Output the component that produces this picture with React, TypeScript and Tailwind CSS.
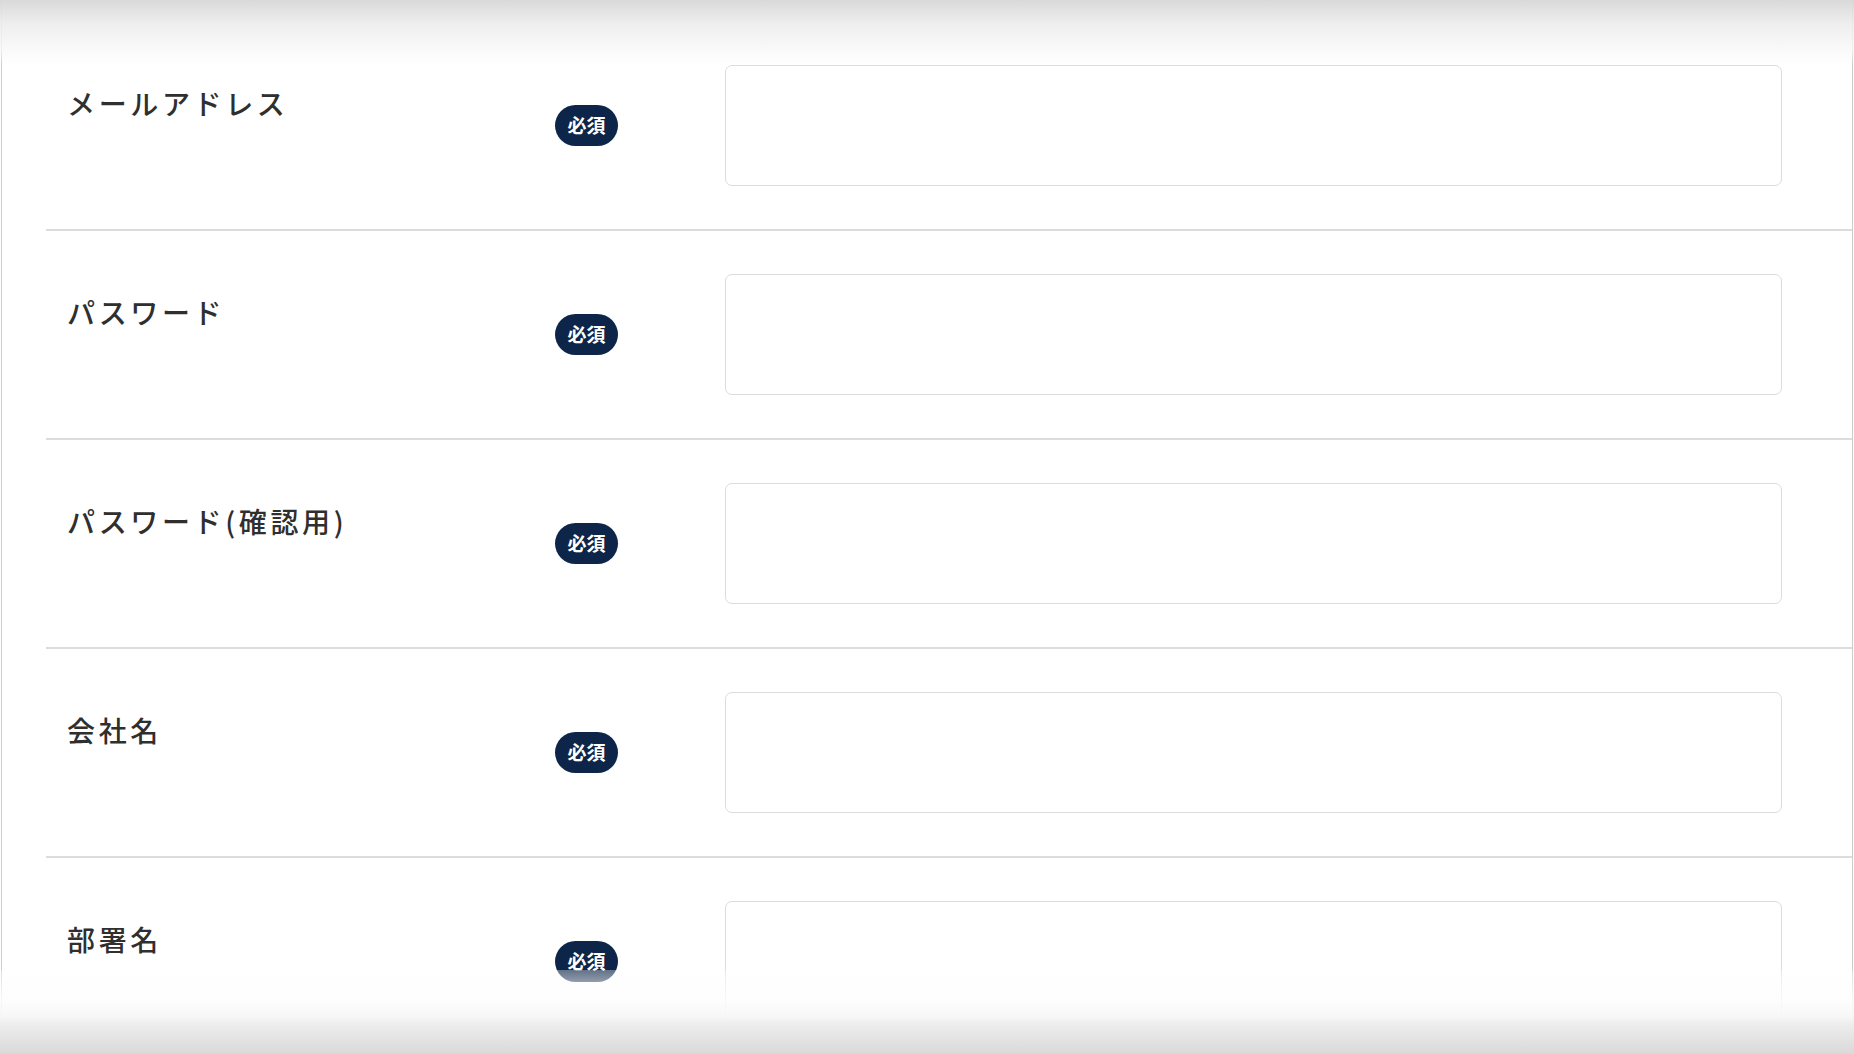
const fields = ["メールアドレス", "パスワード", "パスワード(確認用)", "会社名", "部署名"]

const Row = ({ label }: { label: string }) => {
    return (
        <div className="flex items-start ml-[44px] pl-[21px] py-[43px] border-b-2 border-[#dcdcdc]">
            <div className="w-[488px] pt-[17px] text-[28px] leading-[42px] tracking-[0.13em] font-medium text-[#2f2f2f]">
                {label}
            </div>
            <div className="self-center w-[63px] h-[41px] rounded-full bg-[#0c2548] flex items-center justify-center text-white text-[19px] font-bold">
                必須
            </div>
            <input
                type="text"
                className="ml-[107px] w-[1057px] h-[121px] rounded-[7px] border border-[#dcdcdc] bg-white outline-none"
            />
        </div>
    )
}

export default function App() {
    return (
        <div
            className="relative h-[1054px] w-full overflow-hidden bg-white"
            style={{ fontFamily: '"Noto Sans CJK JP", "Noto Sans", sans-serif' }}
        >
            <div className="ml-px w-[1852px] h-full border-x border-[#cccccc] pt-[22px]">
                {fields.map((f) => (
                    <Row key={f} label={f} />
                ))}
            </div>

            {/* fade overlays at top and bottom */}
            <div className="absolute left-0 right-0 top-0 h-[66px] pointer-events-none bg-[linear-gradient(to_bottom,rgba(215,215,215,0.95)_0%,rgba(236,236,236,0.9)_35%,rgba(248,248,248,0.8)_75%,rgba(255,255,255,0)_100%)]" />
            <div className="absolute left-0 right-0 bottom-0 h-[84px] pointer-events-none bg-[linear-gradient(to_bottom,rgba(255,255,255,0.35)_0%,rgba(253,253,253,0.85)_35%,rgba(247,247,247,0.97)_55%,#ededed_65%,#e3e3e3_82%,#d9d9d9_100%)]" />
        </div>
    )
}
